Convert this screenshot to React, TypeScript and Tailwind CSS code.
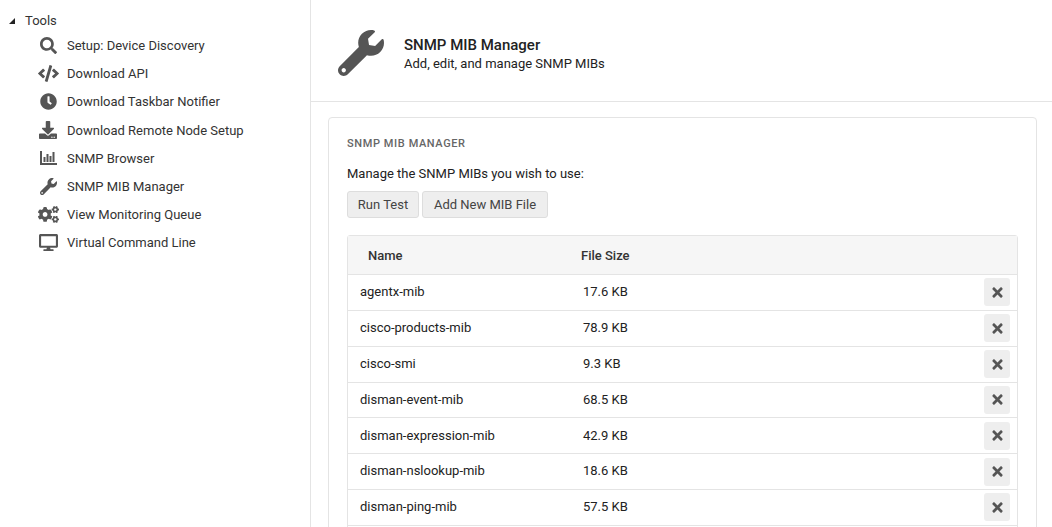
import React from "react";
import { FaSearch, FaCode, FaClock, FaDownload, FaWrench, FaCogs, FaDesktop, FaTimes } from "react-icons/fa";

function ChartIcon() {
  return (
    <svg viewBox="0 0 17 14" className="w-[17px] h-[14px]" fill="#555">
      <path d="M0 0h2v12h15v2H0z" />
      <rect x="3.5" y="6" width="2" height="5" />
      <rect x="6.5" y="3" width="2" height="8" />
      <rect x="9.5" y="5" width="2" height="6" />
      <rect x="12.5" y="1" width="2" height="10" />
    </svg>
  );
}

const nav: [React.ReactNode, string, number][] = [
  [<FaSearch size={17} color="#555" />, "Setup: Device Discovery", 28],
  [<FaCode size={21} color="#555" />, "Download API", 28],
  [<FaClock size={17} color="#555" />, "Download Taskbar Notifier", 28],
  [<FaDownload size={18} color="#555" />, "Download Remote Node Setup", 29],
  [<ChartIcon />, "SNMP Browser", 28],
  [<FaWrench size={17} color="#555" />, "SNMP MIB Manager", 28],
  [<FaCogs size={21} color="#555" />, "View Monitoring Queue", 28],
  [<FaDesktop size={19} color="#555" />, "Virtual Command Line", 28],
];

const rows = [
  ["agentx-mib", "17.6 KB"],
  ["cisco-products-mib", "78.9 KB"],
  ["cisco-smi", "9.3 KB"],
  ["disman-event-mib", "68.5 KB"],
  ["disman-expression-mib", "42.9 KB"],
  ["disman-nslookup-mib", "18.6 KB"],
  ["disman-ping-mib", "57.5 KB"],
];

export default function App() {
  return (
    <div className="flex h-[527px] w-[1052px] overflow-hidden bg-white text-[13px] text-[#333] font-['Roboto',sans-serif]">
      <aside className="w-[311px] shrink-0 border-r border-[#e4e4e4] pt-[11px]">
        <div className="flex items-center h-[19px] pl-[9px] text-[#333]">
          <span className="w-0 h-0 border-l-[6px] border-l-transparent border-b-[6px] border-b-[#222]" />
          <span className="ml-[10px]">Tools</span>
        </div>
        <ul className="pt-[2px]">
          {nav.map(([icon, label, h]) => (
            <li key={label} style={{ height: h }} className="flex items-center">
              <span className="w-[67px] pl-[36px] pr-[7px] flex justify-center shrink-0 -translate-y-[1px]">{icon}</span>
              <span className="whitespace-nowrap">{label}</span>
            </li>
          ))}
        </ul>
      </aside>
      <main className="flex-1 min-w-0">
        <header className="h-[102px] border-b border-[#e4e4e4] flex items-center pl-[27px] pt-[5px]">
          <FaWrench size={46} color="#555" />
          <div className="ml-[20px] pt-[2px]">
            <div className="text-[15px] leading-[19px] font-medium text-[#222]">SNMP MIB Manager</div>
            <div className="text-[13px] leading-[17px] text-[#222]">Add, edit, and manage SNMP MIBs</div>
          </div>
        </header>
        <section className="ml-[17px] mr-[15px] mt-[15px] border border-[#e4e4e4] rounded-[4px] px-[18px] pt-[19px]">
          <h2 className="text-[11px] leading-[14px] font-medium tracking-[0.6px] text-[#666]">SNMP MIB MANAGER</h2>
          <p className="mt-[14px] leading-[18px] text-[#222]">Manage the SNMP MIBs you wish to use:</p>
          <div className="mt-[8px] flex gap-[3px]">
            <button className="h-[27px] w-[72px] bg-[#eee] border border-[#ddd] rounded-[3px] text-[#444]">Run Test</button>
            <button className="h-[27px] w-[126px] bg-[#eee] border border-[#ddd] rounded-[3px] text-[#444]">Add New MIB File</button>
          </div>
          <div className="mt-[17px] border border-[#e4e4e4] rounded-[3px]">
            <div className="h-[39px] pt-[1px] bg-[#f6f6f6] border-b border-[#e4e4e4] flex items-center font-medium text-[#333]">
              <span className="w-[233px] pl-[20px]">Name</span>
              <span>File Size</span>
            </div>
            {rows.map(([name, size]) => (
              <div key={name} className="h-[35.85px] border-b border-[#e4e4e4] flex items-center text-[#222]">
                <span className="w-[235px] pl-[12px] pb-[1px]">{name}</span>
                <span className="flex-1 pb-[1px]">{size}</span>
                <span className="w-[26px] h-[28px] mr-[7px] bg-[#eee] rounded-[3px] flex items-center justify-center">
                  <FaTimes size={15} color="#555" />
                </span>
              </div>
            ))}
            <div className="h-[36px]" />
          </div>
        </section>
      </main>
    </div>
  );
}
